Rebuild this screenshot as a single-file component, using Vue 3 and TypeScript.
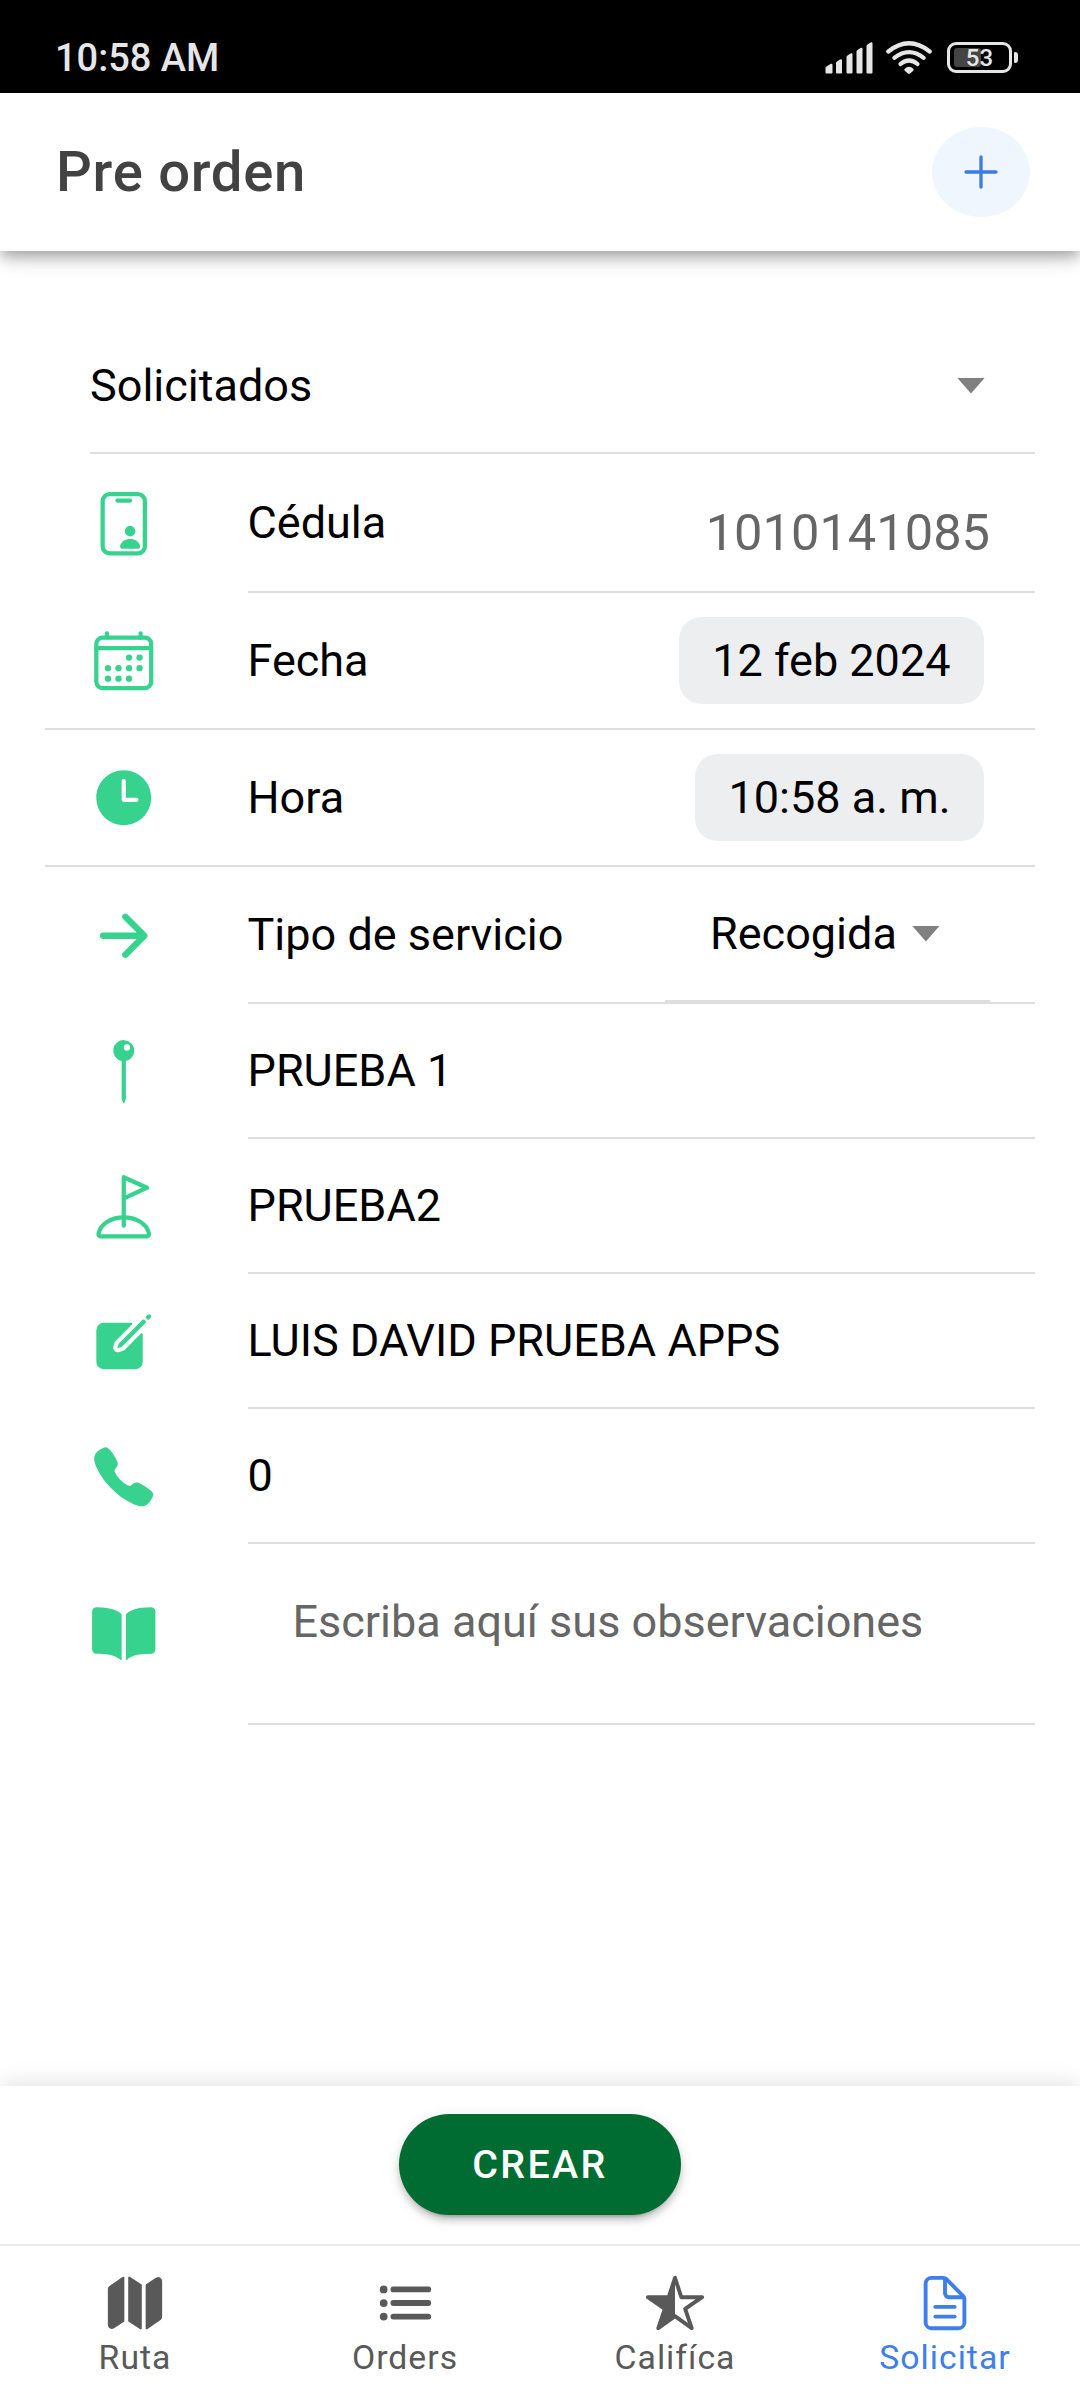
<script setup lang="ts">
type RowKind = 'text' | 'number' | 'chip' | 'select' | 'note'

interface Row {
  icon: string
  label: string
  kind: RowKind
  value?: string
  wideLine?: boolean
}

interface Tab {
  icon: string
  label: string
  active?: boolean
}

const rows: Row[] = [
  { icon: 'id', label: 'Cédula', kind: 'number', value: '1010141085' },
  { icon: 'calendar', label: 'Fecha', kind: 'chip', value: '12 feb 2024', wideLine: true },
  { icon: 'time', label: 'Hora', kind: 'chip', value: '10:58 a. m.', wideLine: true },
  { icon: 'arrow', label: 'Tipo de servicio', kind: 'select', value: 'Recogida' },
  { icon: 'pin', label: 'PRUEBA 1', kind: 'text' },
  { icon: 'golf', label: 'PRUEBA2', kind: 'text' },
  { icon: 'create', label: 'LUIS DAVID PRUEBA APPS', kind: 'text' },
  { icon: 'call', label: '0', kind: 'text' },
  { icon: 'book', label: 'Escriba aquí sus observaciones', kind: 'note' },
]

const tabs: Tab[] = [
  { icon: 'map', label: 'Ruta' },
  { icon: 'list', label: 'Orders' },
  { icon: 'star', label: 'Califíca' },
  { icon: 'document', label: 'Solicitar', active: true },
]
</script>

<template>
  <div class="screen">
    <div class="status">
      <span class="clock">10:58 AM</span>
      <svg class="status-icons" viewBox="0 0 127 40" width="127" height="40">
        <g fill="#e6e6e6">
          <path d="M5.500 33.500v-4.500q0-1 1-1.500l4-2.500q2-.8 2 1v7.500q0 1-1 1h-5q-1 0-1-1z" />
          <path d="M16 33.500V24q0-1 1-1.500l3-2q2-.8 2 1v12q0 1-1 1h-4q-1 0-1-1z" />
          <path d="M26.500 33.500V18q0-1 1-1.500l3-2q2-.8 2 1v18q0 1-1 1h-4q-1 0-1-1z" />
          <path d="M36.500 33.500V12.500q0-1 1-1.500l3-2q2-.8 2 1v23.500q0 1-1 1h-4q-1 0-1-1z" />
          <path d="M46.500 33.500V7q0-1 1-1.500l3-2q2-.8 2 1v29q0 1-1 1h-4q-1 0-1-1z" />
          <path d="M84.500 30q4.500-4.500 9 0 .6.900-.2 1.700l-3.200 2.800q-1.100.9-2.200 0l-3.200-2.800q-.8-.8-.2-1.700z" />
        </g>
        <g fill="none" stroke="#e6e6e6" stroke-width="4.200" stroke-linecap="round">
          <path d="M80.500 25q8.500-7 17 0" />
          <path d="M74.300 18.800q14.700-11.500 29.400 0" />
          <path d="M68.300 12.500q20.700-16.500 41.400 0" />
        </g>
      </svg>
      <div class="battery">
        <i class="charge"></i>
        <span>53</span>
      </div>
      <i class="battery-tip"></i>
    </div>

    <header class="header">
      <h1>Pre orden</h1>
      <button class="add" type="button" aria-label="Agregar">
        <svg viewBox="0 0 34 34" width="34" height="34">
          <path d="M17 2v30M2 17h30" fill="none" stroke="#3d7be0" stroke-width="3.300" stroke-linecap="round" />
        </svg>
      </button>
    </header>

    <main class="content">
      <div class="requested">
        <span>Solicitados</span>
        <i class="caret"></i>
      </div>

      <div v-for="row in rows" :key="row.icon" class="row" :class="[row.kind, { wide: row.wideLine }]">
        <svg class="icon" :class="row.icon" viewBox="0 0 512 512">
          <template v-if="row.icon === 'id'">
            <rect x="96" y="32" width="320" height="448" rx="52" class="s32" />
            <path d="M208 80h96" class="s32" />
            <circle cx="304" cy="312" r="40" class="f" />
            <path d="M304 372c-34 0-69 19-76 53-1 11 5 21 16 21h120c11 0 17-10 16-21-7-35-42-53-76-53z" class="f" />
          </template>
          <template v-else-if="row.icon === 'calendar'">
            <rect x="48" y="80" width="416" height="384" rx="48" class="s32" />
            <path d="M128 48v32M384 48v32M464 160H48" class="s32" />
            <g class="f">
              <circle cx="296" cy="232" r="24" /><circle cx="376" cy="232" r="24" />
              <circle cx="136" cy="312" r="24" /><circle cx="216" cy="312" r="24" />
              <circle cx="296" cy="312" r="24" /><circle cx="376" cy="312" r="24" />
              <circle cx="136" cy="392" r="24" /><circle cx="216" cy="392" r="24" />
              <circle cx="296" cy="392" r="24" />
            </g>
          </template>
          <path v-else-if="row.icon === 'time'" class="f" d="M256 48C141.130 48 48 141.130 48 256s93.130 208 208 208 208-93.130 208-208S370.870 48 256 48zm96 240h-96a16 16 0 01-16-16V128a16 16 0 0132 0v128h80a16 16 0 010 32z" />
          <path v-else-if="row.icon === 'arrow'" class="s48" d="M268 112l144 144-144 144M392 256H100" />
          <path v-else-if="row.icon === 'pin'" class="f" d="M336 96a80 80 0 10-96 78.390v283.170a32.090 32.090 0 002.490 12.380l10.070 24a3.920 3.920 0 006.880 0l10.070-24a32.090 32.090 0 002.490-12.380V174.390A80.130 80.130 0 00336 96zm-56 0a24 24 0 1124-24 24 24 0 01-24 24z" />
          <template v-else-if="row.icon === 'golf'">
            <path class="s32" d="M256 400V32l176 80-176 80" />
            <path class="s32" d="M256 336c-87 0-175.300 43.200-191.640 124.740C62.390 470.570 68.570 480 80 480h352c11.440 0 17.620-9.430 15.650-19.260C431.300 379.200 343 336 256 336z" />
          </template>
          <template v-else-if="row.icon === 'create'">
            <path class="f" d="M459.940 53.250a16.060 16.060 0 00-23.220-.56L424.350 65a8 8 0 000 11.310l11.340 11.320a8 8 0 0011.340 0l12.060-12c6.100-6.090 6.670-16.010.85-22.380zM399.340 90L218.820 270.200a9 9 0 00-2.310 3.930L208.160 299a3.910 3.910 0 004.860 4.860l24.850-8.350a9 9 0 003.930-2.310L422 112.660a9 9 0 000-12.660l-9.950-10a9 9 0 00-12.710 0z" />
            <path class="f" d="M386.340 193.660L264.450 315.790A41.080 41.080 0 01247.580 326l-25.900 8.670a35.920 35.920 0 01-44.330-44.330l8.670-25.900a41.080 41.080 0 0110.190-16.870l122.130-121.910a8 8 0 00-5.650-13.660H104a56 56 0 00-56 56v240a56 56 0 0056 56h240a56 56 0 0056-56V199.310a8 8 0 00-13.660-5.650z" />
          </template>
          <path v-else-if="row.icon === 'call'" class="f" d="M391 480c-19.520 0-46.940-7.060-88-30-49.930-28-88.550-53.850-138.210-103.380C116.910 298.770 93.610 267.790 61 208.450c-36.840-67-30.560-102.120-23.540-117.130C45.820 73.380 58.160 62.650 74.110 52a176.300 176.300 0 0128.640-15.200c1-.43 1.930-.84 2.760-1.210 4.950-2.230 12.450-5.600 21.950-2 6.340 2.380 12 7.250 20.860 16 18.170 17.920 43 57.830 52.160 77.430 6.150 13.210 10.220 21.930 10.230 31.710 0 11.450-5.760 20.280-12.750 29.810-1.310 1.790-2.610 3.500-3.870 5.160-7.610 10-9.280 12.890-8.180 18.050 2.230 10.370 18.860 41.240 46.190 68.510s57.310 42.850 67.720 45.070c5.380 1.150 8.330-.59 18.650-8.470 1.480-1.130 3-2.300 4.590-3.470 10.660-7.930 19.080-13.540 30.260-13.540h.06c9.730 0 18.060 4.220 31.860 11.180 18 9.080 59.110 33.590 77.140 51.780 8.770 8.840 13.660 14.480 16.050 20.810 3.600 9.530.21 17-2 22-.37.83-.78 1.740-1.210 2.750a176.490 176.490 0 01-15.290 28.580c-10.630 15.900-21.400 28.210-39.380 36.580A67.420 67.420 0 01391 480z" />
          <path v-else class="f" d="M202.240 74C166.110 56.750 115.610 48.300 48 48a31.360 31.360 0 00-17.920 5.330A32 32 0 0016 79.900V366c0 19.340 13.760 33.930 32 33.930 71.070 0 142.360 6.640 185.060 47a4.110 4.110 0 006.940-3V106.820a15.890 15.890 0 00-5.460-12A143 143 0 00202.240 74zM481.920 53.300A31.330 31.330 0 00464 48c-67.610.3-118.110 8.710-154.240 26a143.310 143.310 0 00-32.310 20.780 15.930 15.930 0 00-5.450 12v337.130a3.930 3.930 0 006.680 2.810c25.670-25.500 70.720-46.820 185.360-46.810a32 32 0 0032-32v-288a32 32 0 00-14.120-26.610z" />
        </svg>
        <div class="body">
          <span class="label">{{ row.label }}</span>
          <span v-if="row.kind === 'number'" class="doc-number">{{ row.value }}</span>
          <span v-if="row.kind === 'chip'" class="date-chip">{{ row.value }}</span>
          <div v-if="row.kind === 'select'" class="picker">
            <span>{{ row.value }}</span>
            <i class="caret"></i>
          </div>
        </div>
      </div>
    </main>

    <footer class="footer">
      <button class="submit" type="button">CREAR</button>
    </footer>

    <nav class="tabs">
      <div v-for="tab in tabs" :key="tab.label" class="tab" :class="{ active: tab.active }">
        <svg viewBox="0 0 512 512" width="62" height="62">
          <path v-if="tab.icon === 'map'" class="f" d="M48.170 113.340A32 32 0 0032 141.240V438a32 32 0 0047 28.370c.43-.23.85-.47 1.260-.74l84.140-55.050a8 8 0 003.630-6.720V46.450a8 8 0 00-12.510-6.630zM212.360 39.310A8 8 0 00200 46v357.560a8 8 0 003.630 6.720l96 62.420A8 8 0 00312 466V108.670a8 8 0 00-3.640-6.730zM464.530 46.470a31.640 31.640 0 00-31.500-.88 12.070 12.070 0 00-1.250.74l-84.150 55a8 8 0 00-3.630 6.720v357.460a8 8 0 0012.520 6.630l107.070-73.460a32 32 0 0016.410-28v-296a32.760 32.760 0 00-15.470-28.210z" />
          <template v-else-if="tab.icon === 'list'">
            <path class="s48" d="M160 144h288M160 256h288M160 368h288" />
            <circle class="f" cx="80" cy="144" r="32" />
            <circle class="f" cx="80" cy="256" r="32" />
            <circle class="f" cx="80" cy="368" r="32" />
          </template>
          <template v-else-if="tab.icon === 'star'">
            <path class="s32" d="M480 208H308L256 48l-52 160H32l140 96-54 160 138-100 138 100-54-160z" />
            <path class="f" d="M256 48v316L118 464l54-160-140-96h172l52-160z" />
          </template>
          <template v-else>
            <path class="s32" d="M416 221.250V416a48 48 0 01-48 48H144a48 48 0 01-48-48V96a48 48 0 0148-48h98.750a32 32 0 0122.620 9.370l141.260 141.260a32 32 0 019.370 22.620z" />
            <path class="s32" d="M256 56v120a32 32 0 0032 32h120M176 288h160M176 368h160" />
          </template>
        </svg>
        <span>{{ tab.label }}</span>
      </div>
    </nav>
  </div>
</template>

<style>
body {
  margin: 0;
  background: #fff;
}
</style>

<style scoped>
.screen {
  display: flex;
  flex-direction: column;
  width: 1080px;
  height: 2400px;
  overflow: hidden;
  background: #fff;
  color: #000;
  font-family: Roboto, "Noto Sans", sans-serif;
  font-size: 45px;
  line-height: 54px;
}
.screen *,
.screen {
  box-sizing: border-box;
}
.f {
  fill: currentColor;
}
.s32,
.s48 {
  fill: none;
  stroke: currentColor;
  stroke-width: 32px;
  stroke-linecap: round;
  stroke-linejoin: round;
}
.s48 {
  stroke-width: 48px;
}

.status {
  display: flex;
  flex: none;
  align-items: flex-start;
  height: 93px;
  padding: 39px 62px 0 55px;
  background: #000;
  color: #e6e6e6;
}
.clock {
  flex: 1;
  font-size: 38px;
  font-weight: 500;
  line-height: 39px;
}
.status-icons {
  flex: none;
}
.battery {
  display: grid;
  flex: none;
  place-items: center;
  width: 65px;
  height: 31px;
  margin-top: 3px;
  border: 3px solid #e6e6e6;
  border-radius: 9px;
  font-size: 24px;
  font-weight: 500;
  line-height: 24px;
}
.battery > * {
  grid-area: 1 / 1;
}
.charge {
  justify-self: start;
  width: 27px;
  height: 19px;
  margin-left: 4px;
  border-radius: 3px;
  background: #444;
}
.battery-tip {
  width: 4px;
  height: 11px;
  margin: 13px 0 0 2px;
  border-radius: 1px 3px 3px 1px;
  background: #e6e6e6;
}

.header {
  z-index: 1;
  display: flex;
  flex: none;
  align-items: center;
  justify-content: space-between;
  height: 158px;
  padding: 0 50.500px 0 56px;
  background: #fff;
  box-shadow: 0 6px 11px -3px rgba(0, 0, 0, 0.2), 0 9px 14px 0 rgba(0, 0, 0, 0.14), 0 3px 26px 0 rgba(0, 0, 0, 0.12);
}
.header h1 {
  margin: 0;
  color: #424242;
  font-size: 56.250px;
  font-weight: 500;
  letter-spacing: 0.700px;
  line-height: 66px;
}
.add {
  display: grid;
  place-items: center;
  width: 98px;
  height: 90px;
  padding: 0;
  border: 0;
  border-radius: 50%;
  background: #eff6fe;
}

.content {
  display: flex;
  flex: 1;
  flex-direction: column;
  padding: 68px 45px 0;
}
.requested {
  display: flex;
  flex: none;
  align-items: center;
  justify-content: space-between;
  height: 135px;
  margin-left: 45px;
  padding-right: 50px;
  border-bottom: 2px solid #dedede;
}
.caret {
  flex: none;
  width: 28px;
  height: 16px;
  background: #808080;
  clip-path: polygon(0 0, 100% 0, 50% 100%);
}
.row {
  display: flex;
  flex: none;
  height: 135px;
  padding-left: 45px;
}
.row.number {
  height: 139px;
}
.row.chip,
.row.select {
  height: 137px;
}
.row.note {
  height: 181px;
}
.row.wide {
  border-bottom: 2px solid #dedede;
}
.icon {
  flex: none;
  align-self: center;
  width: 67.500px;
  height: 67.500px;
  margin-right: 90.500px;
  color: #36d28e;
}
.icon.id {
  margin-top: 1px;
}
.body {
  display: flex;
  flex: 1;
  align-items: center;
  justify-content: space-between;
  border-bottom: 2px solid #dedede;
}
.row.wide .body {
  border-bottom: 0;
}
.label {
  margin-left: -0.500px;
}
.doc-number {
  margin: 20px 45px 0 0;
  color: #666;
  font-size: 50.600px;
}
.date-chip {
  display: flex;
  align-items: center;
  height: 87px;
  margin-right: 51px;
  padding: 0 33.500px 0 33px;
  border-radius: 22.500px;
  background: #edeef0;
}
.picker {
  display: flex;
  align-items: center;
  align-self: stretch;
  gap: 15px;
  width: 325px;
  margin-right: 45px;
  padding-left: 45px;
  border-bottom: 2px solid #dedede;
}
.note .label {
  margin: 0 0 23px 44.500px;
  color: #666;
}

.footer {
  display: flex;
  flex: none;
  justify-content: center;
  height: 158px;
  padding-top: 28px;
  background: #fff;
  box-shadow: 0 0 24px rgba(0, 0, 0, 0.14);
}
.submit {
  width: 282px;
  height: 101px;
  padding: 0;
  border: 0;
  border-radius: 51px;
  background: #016c31;
  box-shadow: 0 8px 3px -6px rgba(0, 0, 0, 0.2), 0 6px 6px 0 rgba(0, 0, 0, 0.14), 0 3px 14px 0 rgba(0, 0, 0, 0.12);
  color: #fff;
  font-family: inherit;
  font-size: 39.400px;
  font-weight: 500;
  letter-spacing: 2.360px;
}
.tabs {
  z-index: 1;
  display: flex;
  flex: none;
  height: 156px;
  border-top: 2px solid #ededed;
  background: #fff;
}
.tab {
  display: flex;
  flex: 1;
  flex-direction: column;
  align-items: center;
  padding-top: 26px;
  color: #595959;
  font-size: 33.750px;
  letter-spacing: 1px;
  line-height: 40px;
}
.tab span {
  margin-top: 4px;
}
.tab.active {
  color: #407ee8;
}
</style>
